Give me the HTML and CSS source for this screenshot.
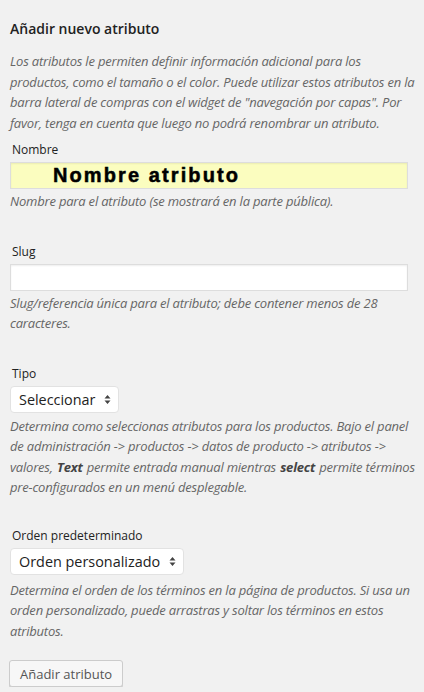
FILE: index.html
```html
<!DOCTYPE html>
<html lang="es">

<head>
    <meta charset="UTF-8">
    <meta name="viewport" content="width=device-width, initial-scale=1.0">
    <title>Añadir nuevo atributo</title>
    <link rel="stylesheet" href="styles.css">
</head>

<body>
    <div class="form-wrap">
        <h3>Añadir nuevo atributo</h3>
        <p class="intro">Los atributos le permiten definir información adicional para los productos, como el tamaño o el color. Puede utilizar estos atributos en la barra lateral de compras con el widget de "navegación por capas". Por favor, tenga en cuenta que luego no podrá renombrar un atributo.</p>

        <form>
            <div class="form-field field-name">
                <label for="attribute_label">Nombre</label>
                <input type="text" id="attribute_label" class="highlight" value="Nombre atributo">
                <p class="description">Nombre para el atributo (se mostrará en la parte pública).</p>
            </div>

            <div class="form-field field-slug">
                <label for="attribute_name">Slug</label>
                <input type="text" id="attribute_name" maxlength="28">
                <p class="description">Slug/referencia única para el atributo; debe contener menos de 28 caracteres.</p>
            </div>

            <div class="form-field field-type">
                <label for="attribute_type">Tipo</label>
                <select id="attribute_type">
                    <option>Seleccionar</option>
                    <option>Texto</option>
                </select>
                <p class="description">Determina como seleccionas atributos para los productos. Bajo el panel de administración -&gt; productos -&gt; datos de producto -&gt; atributos -&gt; valores, <strong>Text</strong> permite entrada manual mientras <strong>select</strong> permite términos pre-configurados en un menú desplegable.</p>
            </div>

            <div class="form-field field-order">
                <label for="attribute_orderby">Orden predeterminado</label>
                <select id="attribute_orderby">
                    <option>Orden personalizado</option>
                    <option>Nombre</option>
                    <option>ID de término</option>
                </select>
                <p class="description">Determina el orden de los términos en la página de productos. Si usa un orden personalizado, puede arrastras y soltar los términos en estos atributos.</p>
            </div>

            <button type="button" class="button">Añadir atributo</button>
        </form>
    </div>
</body>

</html>
```

FILE: styles.css
```css
body {
    margin: 0;
    background: #f1f1f1;
    color: #222;
    font-family: "Open Sans", sans-serif;
    font-size: 13px;
}

.form-wrap {
    padding: 0 2px 0 10px;
}

h3 {
    font-size: 14px;
    font-weight: 600;
    color: #222;
    margin: 0;
    padding-top: 19px;
    line-height: 20px;
}

.intro,
.description {
    font-style: italic;
    color: #666;
    font-size: 13px;
    line-height: 20.5px;
    letter-spacing: -0.2px;
    margin: 0;
}

.intro {
    margin-top: 12px;
}

.form-field {
    margin-top: 8px;
}

.form-field label {
    display: block;
    font-size: 12px;
    line-height: 18px;
    padding-left: 2px;
    margin-bottom: 3px;
}

.form-field input {
    display: block;
    box-sizing: border-box;
    width: 398px;
    height: 27px;
    margin: 0;
    border: 1px solid #ddd;
    background: #fff;
    box-shadow: inset 0 1px 2px rgba(0, 0, 0, 0.07);
    font-family: "Open Sans", sans-serif;
    font-size: 14px;
    padding: 0 8px;
}

.form-field input.highlight {
    background: #fbfdbf;
    font-family: "Liberation Sans", Arial, sans-serif;
    font-weight: bold;
    font-size: 20px;
    letter-spacing: 2.1px;
    -webkit-text-stroke: 0.5px #000;
    color: #000;
    padding-left: 42px;
}

.form-field select {
    display: block;
    box-sizing: border-box;
    height: 27px;
    margin: 0;
    padding: 0 16px 0 8px;
    border: 1px solid #e2e2e2;
    border-radius: 4px;
    background: #fff;
    font-family: "Open Sans", sans-serif;
    font-size: 14.4px;
    color: #222;
    -webkit-appearance: none;
    appearance: none;
    background-image: url("data:image/svg+xml,%3Csvg xmlns='http://www.w3.org/2000/svg' width='7' height='11' viewBox='0 0 7 11'%3E%3Cpath d='M3.5 1 L6.5 4.5 L0.5 4.5 Z M3.5 10 L6.5 6.5 L0.5 6.5 Z' fill='%23444'/%3E%3C/svg%3E");
    background-repeat: no-repeat;
    background-position: right 7px center;
}

#attribute_type {
    width: 109px;
}

#attribute_orderby {
    width: 174px;
}

.form-field .description {
    margin-top: 2px;
}

.description strong {
    font-weight: 700;
    color: #444;
    padding: 0 1px;
}

.field-slug,
.field-type {
    margin-top: 31px;
}

.field-order {
    margin-top: 29px;
}

.field-type .description {
    margin-top: 3px;
}

.field-order .description {
    margin-top: 5px;
}

.button {
    display: block;
    box-sizing: border-box;
    margin: 19px 0 0 -1px;
    height: 27px;
    padding: 0 10px;
    border: 1px solid #ccc;
    border-radius: 3px;
    background: #f7f7f7;
    box-shadow: 0 1px 0 #ccc;
    font-family: "Open Sans", sans-serif;
    font-size: 13px;
    color: #555;
}
```
